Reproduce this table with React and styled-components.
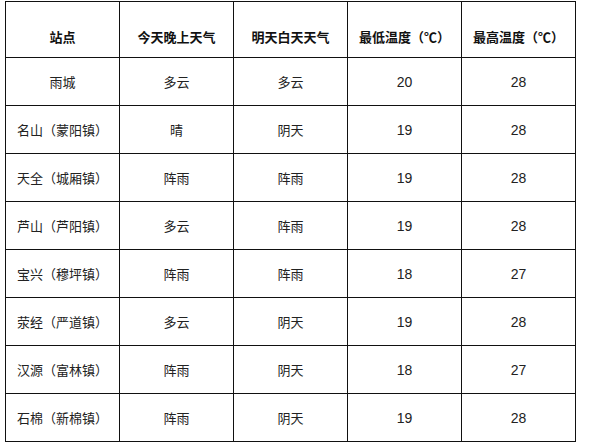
import React from 'react';
import styled, { createGlobalStyle } from 'styled-components';

const GlobalStyle = createGlobalStyle`
  html, body {
    margin: 0;
    padding: 0;
    background: #ffffff;
  }
  body {
    font-family: 'Noto Sans CJK SC', 'Noto Sans', sans-serif;
  }
`;

const Page = styled.div`
  width: 590px;
  height: 448px;
  padding: 1px 0 0 5px;
  box-sizing: border-box;
  background: #ffffff;
`;

const Table = styled.table`
  border-collapse: collapse;
  table-layout: fixed;
  width: 571px;
`;

const HeadCell = styled.th`
  width: 114px;
  height: 56px;
  padding: 14px 0 0;
  box-sizing: border-box;
  border: 1px solid #111;
  font-size: 13px;
  font-weight: 700;
  color: #111;
  text-align: center;
  vertical-align: middle;
  white-space: nowrap;
`;

const Cell = styled.td`
  height: 48px;
  padding: 0;
  box-sizing: border-box;
  border: 1px solid #111;
  font-size: ${(p) => (p.$num ? '14px' : '13px')};
  color: #222;
  text-align: center;
  vertical-align: middle;
  white-space: nowrap;
  font-family: ${(p) =>
    p.$num
      ? "'Liberation Sans', 'Noto Sans', sans-serif"
      : "'Noto Sans CJK SC', 'Noto Sans', sans-serif"};
`;

const headers = ['站点', '今天晚上天气', '明天白天天气', '最低温度（℃）', '最高温度（℃）'];

const rows = [
  ['雨城', '多云', '多云', '20', '28'],
  ['名山（蒙阳镇）', '晴', '阴天', '19', '28'],
  ['天全（城厢镇）', '阵雨', '阵雨', '19', '28'],
  ['芦山（芦阳镇）', '多云', '阵雨', '19', '28'],
  ['宝兴（穆坪镇）', '阵雨', '阵雨', '18', '27'],
  ['荥经（严道镇）', '多云', '阴天', '19', '28'],
  ['汉源（富林镇）', '阵雨', '阴天', '18', '27'],
  ['石棉（新棉镇）', '阵雨', '阴天', '19', '28'],
];

const App = () => {
  return (
    <Page>
      <GlobalStyle />
      <Table>
        <thead>
          <tr>
            {headers.map((h) => (
              <HeadCell key={h}>{h}</HeadCell>
            ))}
          </tr>
        </thead>
        <tbody>
          {rows.map((r) => (
            <tr key={r[0]}>
              {r.map((v, i) => (
                <Cell key={i} $num={i >= 3}>
                  {v}
                </Cell>
              ))}
            </tr>
          ))}
        </tbody>
      </Table>
    </Page>
  );
};

export default App;
